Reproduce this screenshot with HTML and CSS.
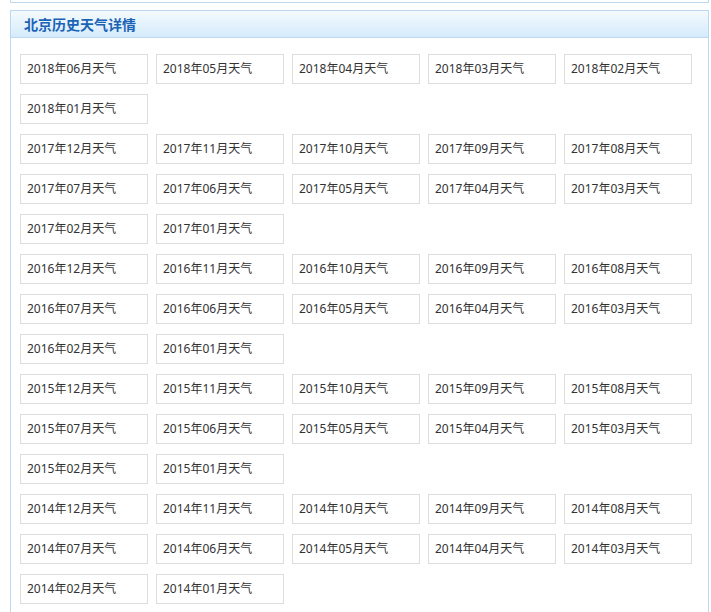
FILE: index.html
```html
<!DOCTYPE html>
<html lang="zh-CN">
<head>
    <meta charset="UTF-8">
    <title>北京历史天气详情</title>
    <link rel="stylesheet" href="styles.css">
</head>
<body>
    <div class="page">
        <div class="prev-box"></div>

        <div class="panel">
            <div class="panel-head">北京历史天气详情</div>
            <div class="panel-body" id="months"></div>
        </div>
    </div>

    <script>
        const groups = [
            { year: 2018, from: 6 },
            { year: 2017, from: 12 },
            { year: 2016, from: 12 },
            { year: 2015, from: 12 },
            { year: 2014, from: 12 }
        ];

        const body = document.getElementById('months');

        groups.forEach(g => {
            const ul = document.createElement('ul');
            ul.className = 'month-list';
            for (let m = g.from; m >= 1; m--) {
                const li = document.createElement('li');
                const a = document.createElement('a');
                const mm = m < 10 ? '0' + m : '' + m;
                a.href = '#';
                a.textContent = g.year + '年' + mm + '月天气';
                li.appendChild(a);
                ul.appendChild(li);
            }
            body.appendChild(ul);
        });
    </script>
</body>
</html>
```

FILE: styles.css
```css
body {
    margin: 0;
    font-family: "Microsoft YaHei", "Noto Sans CJK SC", sans-serif;
    font-size: 14px;
    color: #333;
    background: #fff;
}

.page {
    padding: 0 2px 0 10px;
}

.prev-box {
    height: 2px;
    border: 1px solid #bcd8ee;
    border-top: none;
    margin-bottom: 7px;
}

.panel {
    border: 1px solid #bcd8ee;
    border-bottom: none;
    width: 697px;
}

.panel-head {
    height: 26px;
    line-height: 26px;
    padding-left: 13px;
    font-size: 14px;
    font-weight: bold;
    color: #1b63b5;
    background: linear-gradient(to bottom, #f4fafe, #d5ebfb);
    border-bottom: 1px solid #bcd8ee;
}

.panel-body {
    padding: 16px 0 0 9px;
}

.month-list {
    list-style: none;
    margin: 0;
    padding: 0;
    display: flex;
    flex-wrap: wrap;
}

.month-list li {
    width: 128px;
    margin: 0 8px 10px 0;
}

.month-list a {
    display: block;
    height: 28px;
    line-height: 28px;
    padding-left: 6px;
    border: 1px solid #ddd;
    color: #333;
    text-decoration: none;
    font-family: "Noto Sans", "Noto Sans CJK SC", sans-serif;
    font-size: 12px;
    white-space: nowrap;
}
```
